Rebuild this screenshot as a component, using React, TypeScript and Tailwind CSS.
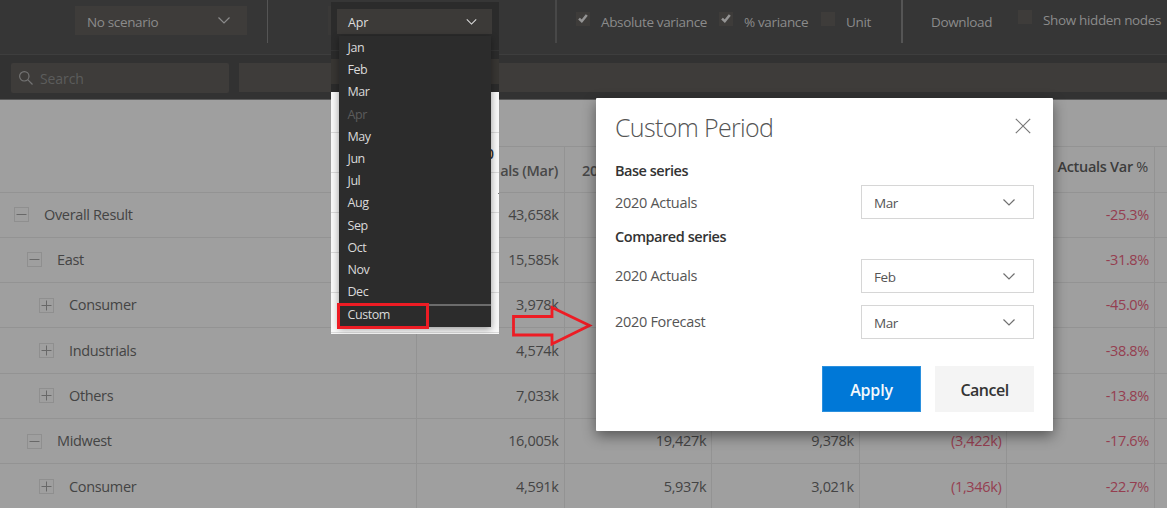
import React from "react";

type Row = { label: string; level: number; open: boolean; cells: string[] };

const rows: Row[] = [
  { label: "Overall Result", level: 0, open: true, cells: ["43,658k", "", "", "", "-25.3%"] },
  { label: "East", level: 1, open: true, cells: ["15,585k", "", "", "", "-31.8%"] },
  { label: "Consumer", level: 2, open: false, cells: ["3,978k", "", "", "", "-45.0%"] },
  { label: "Industrials", level: 2, open: false, cells: ["4,574k", "", "", "", "-38.8%"] },
  { label: "Others", level: 2, open: false, cells: ["7,033k", "", "", "", "-13.8%"] },
  { label: "Midwest", level: 1, open: true, cells: ["16,005k", "19,427k", "9,378k", "(3,422k)", "-17.6%"] },
  { label: "Consumer", level: 2, open: false, cells: ["4,591k", "5,937k", "3,021k", "(1,346k)", "-22.7%"] },
];

const indent = ["pl-[14px]", "pl-[27px]", "pl-[39px]"];
const months = ["Jan", "Feb", "Mar", "Apr", "May", "Jun", "Jul", "Aug", "Sep", "Oct", "Nov", "Dec"];

function Chevron({ className }: { className: string }) {
  return (
    <svg viewBox="0 0 12 7" className={className} fill="none" stroke="currentColor" strokeWidth="1.2">
      <path d="M0.5 0.5 L6 6 L11.5 0.5" />
    </svg>
  );
}

function Check({ on, label, className }: { on: boolean; label: string; className: string }) {
  return (
    <div className={`flex shrink-0 items-start whitespace-nowrap ${className}`}>
      <div className="mt-[12px] flex h-[14px] w-[14px] shrink-0 justify-center bg-[#3e3c3a]">
        {on && (
          <svg viewBox="0 0 10 9" className="mt-[2px] h-[9px] w-[10px]" fill="none" stroke="#949494" strokeWidth="2.5">
            <path d="M1 4.6 L3.8 7.2 L8.8 1" />
          </svg>
        )}
      </div>
      <span className="ml-[11px] mt-[12px] leading-[20px]">{label}</span>
    </div>
  );
}

function Toggle({ open }: { open: boolean }) {
  return (
    <svg viewBox="0 0 15 15" className="h-[15px] w-[15px] shrink-0" fill="none">
      <rect x="0.5" y="0.5" width="14" height="14" stroke="#8f8f8f" />
      <path d={open ? "M2.5 7.5H12.5" : "M2.5 7.5H12.5M7.5 2.5V12.5"} stroke="#686868" />
    </svg>
  );
}

function Select({ value }: { value: string }) {
  return (
    <div className="flex h-[34px] w-[173px] items-center justify-between border border-[#d6d6d6] bg-white pl-[12px] pr-[18px] text-[13.5px] tracking-[-0.4px] text-[#555]">
      <span className="pt-[2px]">{value}</span>
      <Chevron className="h-[7px] w-[12px] text-[#707070]" />
    </div>
  );
}

export default function App() {
  return (
    <div className="relative h-[508px] w-[1167px] overflow-hidden bg-[#9f9f9f] font-['Open_Sans','Noto_Sans',sans-serif]">
      <div className="flex h-[55px] border-b border-[#3e3e3e] bg-[#363636] text-[13.5px] tracking-[-0.35px] text-[#8b8b8b]">
        <div className="ml-[75px] mt-[6px] flex h-[29px] w-[172px] shrink-0 items-center justify-between bg-[#3e3c3a] pl-[12px] pr-[17px]">
          <span className="pt-[3px]">No scenario</span>
          <Chevron className="h-[7px] w-[12px]" />
        </div>
        <div className="ml-[20px] h-[43px] w-px shrink-0 bg-[#555]" />
        <div className="ml-[60px] mt-[6px] h-[29px] w-[171px] shrink-0 bg-[#3a3938]" />
        <div className="ml-[56px] h-[43px] w-[2px] shrink-0 bg-[#484848]" />
        <Check on label="Absolute variance" className="ml-[19px] w-[143px]" />
        <Check on label="% variance" className="w-[102px]" />
        <Check on={false} label="Unit" className="w-[80px]" />
        <div className="h-[43px] w-[2px] shrink-0 bg-[#555]" />
        <span className="ml-[28px] mt-[12px] w-[87px] shrink-0 leading-[20px]">Download</span>
        <Check on={false} label="Show hidden nodes" className="-mt-[2px]" />
      </div>
      <div className="flex h-[45px] gap-[10px] border-b border-[#5a5a5a] bg-[#323232] pl-[11px] pt-[8px]">
        <div className="flex h-[30px] w-[218px] shrink-0 items-center rounded-[2px] bg-[#3e3c3a] pl-[8px] text-[14px] tracking-[-0.1px] text-[#5c5c5c]">
          <svg viewBox="0 0 14 14" className="h-[14px] w-[14px]" fill="none" stroke="#747474" strokeWidth="1.2">
            <circle cx="5.3" cy="5.3" r="4.7" />
            <path d="M8.7 8.7 L13.5 13.5" />
          </svg>
          <span className="ml-[7px] pt-[1px]">Search</span>
        </div>
        <div className="h-[29px] grow bg-[#3e3c3a]" />
      </div>

      <div className="flex h-[92.5px] border-b border-[#939393] text-[14.5px] font-semibold tracking-[-0.3px] text-[#3c3c3c]">
        <div className="w-[417px] shrink-0" />
        <div className="mt-[46px] flex grow border-t border-[#939393]">
          <div className="w-[148px] shrink-0 border-r border-[#939393] pr-[6px] pt-[14px] text-right leading-[20px] text-[#484848]">als (Mar)</div>
          <div className="w-[147.5px] shrink-0 border-r border-[#939393] pl-[17px] pt-[14px] leading-[20px] text-[#484848]">20</div>
          <div className="w-[147.5px] shrink-0 border-r border-[#939393]" />
          <div className="w-[147.5px] shrink-0 border-r border-[#939393]" />
          <div className="w-[147.5px] shrink-0 whitespace-nowrap border-r border-[#939393] pr-[6px] pt-[10px] text-right leading-[20px]">
            Actuals Var <span className="font-normal">%</span>
          </div>
        </div>
      </div>
      {rows.map((r, i) => (
        <div key={i} className="flex h-[45.3px] border-b border-[#939393] text-[14.5px] tracking-[-0.34px] text-[#444]">
          <div className={`flex w-[417px] shrink-0 items-center border-r border-[#939393] ${indent[r.level]}`}>
            <Toggle open={r.open} />
            <span className="ml-[15px]">{r.label}</span>
          </div>
          {r.cells.map((c, j) => (
            <div
              key={j}
              className={`flex w-[147.6px] shrink-0 items-center justify-end border-r border-[#939393] pr-[5px] ${j > 2 ? "text-[#953e50]" : ""}`}
            >
              {c}
            </div>
          ))}
        </div>
      ))}

      <div className="absolute left-[331px] top-[2px] h-[332px] w-[168px] overflow-hidden bg-[#f8f8f8]">
        <div className="flex h-[90px] flex-col bg-[#2b2b2b]">
          <div className="h-[49px] border-b border-[#343434]" />
          <div className="mt-[8px] h-[25px] bg-[#383633]" />
        </div>
        <div className="flex flex-col">
          {[0, 1, 2, 3, 4, 5].map((n) => (
            <div key={n} className={`border-b border-[#dadada] ${n === 0 ? "h-[41px]" : "h-[40px]"}`} />
          ))}
        </div>
        <span className="absolute left-[155px] top-[143px] text-[14px] font-semibold leading-[18px] text-[#333]">0</span>
        <span className="absolute left-[167px] top-[191px] h-px w-px bg-[#777]" />
        <div className="absolute left-[6px] top-[7px] flex h-[25px] w-[155px] items-center justify-between bg-[#3c3a38] pl-[11px] pr-[15px] text-[12.5px] tracking-[-0.2px] text-[#dedede]">
          <span className="pt-[3px]">Apr</span>
          <Chevron className="h-[6px] w-[11px]" />
        </div>
        <div className="absolute left-[8px] top-[34px] h-[291px] w-[152px] bg-[#2c2c2c] text-[12.5px] tracking-[-0.45px] text-[#dadada] shadow-[0_2px_7px_rgba(0,0,0,0.4)]">
          <div className="flex h-[268px] flex-col pt-px">
            {months.map((m) => (
              <div key={m} className={`h-[22.2px] shrink-0 pl-[8.5px] leading-[22.2px] ${m === "Apr" ? "text-[#5c5c5c]" : ""}`}>
                {m}
              </div>
            ))}
          </div>
          <div className="h-[22px] border-t-2 border-[#6c6c6c] pl-[8.5px] leading-[18px]">Custom</div>
        </div>
        <div className="absolute left-[6px] top-[301px] h-[26px] w-[92px] border-[3px] border-[#ed1c24]" />
      </div>

      <svg viewBox="0 0 84 42" className="absolute left-[509.5px] top-[304px] h-[42px] w-[84px]" fill="none" stroke="#ed1c24" strokeWidth="2.8">
        <path d="M3.5 12.5 H42 V3.5 L79.5 21.5 L42 40 V31 H3.5 Z" />
      </svg>

      <div className="absolute left-[596px] top-[98px] flex h-[333px] w-[457px] flex-col rounded-[1px] bg-white pl-[19px] pr-[19px] text-[14.5px] tracking-[-0.3px] text-[#555] shadow-[0_5px_14px_rgba(0,0,0,0.45)]">
        <div className="flex h-[61px] items-start justify-between">
          <h1 className="mt-[11px] text-[25px] font-light leading-[36px] tracking-[-0.65px] text-[#555]">Custom Period</h1>
          <svg viewBox="0 0 16 16" className="mr-[3px] mt-[20px] h-[16px] w-[16px]" fill="none" stroke="#777" strokeWidth="1.2">
            <path d="M0.8 0.8 L15.2 15.2 M15.2 0.8 L0.8 15.2" />
          </svg>
        </div>
        <div className="h-[26px] font-semibold leading-[24px] tracking-[-0.48px] text-[#333]">Base series</div>
        <div className="flex h-[41px] items-start justify-between leading-[20px]">
          <span className="mt-[8px]">2020 Actuals</span>
          <Select value="Mar" />
        </div>
        <div className="h-[33px] font-semibold leading-[22px] tracking-[-0.45px] text-[#333]">Compared series</div>
        <div className="flex h-[46px] items-start justify-between leading-[20px]">
          <span className="mt-[7px]">2020 Actuals</span>
          <Select value="Feb" />
        </div>
        <div className="flex h-[61px] items-start justify-between leading-[20px]">
          <span className="mt-[7px]">2020 Forecast</span>
          <Select value="Mar" />
        </div>
        <div className="flex justify-end gap-[14px] text-[16px] font-semibold tracking-[-0.5px]">
          <button className="h-[46px] w-[99px] border border-[#2b90de] bg-[#0078d7] pt-px tracking-[-0.2px] text-[#f4f8fc]">Apply</button>
          <button className="h-[46px] w-[99px] bg-[#f4f4f4] pt-px text-[#333]">Cancel</button>
        </div>
      </div>
    </div>
  );
}
